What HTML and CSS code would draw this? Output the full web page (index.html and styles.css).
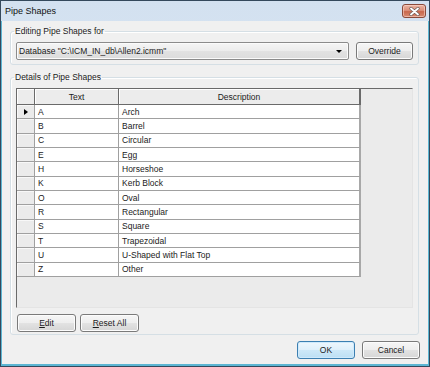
FILE: index.html
```html
<!DOCTYPE html>
<html lang="en">
<head>
<meta charset="utf-8">
<title>Pipe Shapes</title>
<link rel="stylesheet" href="styles.css">
</head>
<body>
<div class="window">
  <div class="titlebar">
    <span class="title">Pipe Shapes</span>
    <button class="close" aria-label="Close">
      <svg width="11" height="9" viewBox="0 0 11 9">
        <path d="M2 1.5 L9 7.5 M9 1.5 L2 7.5" stroke="#6b5a55" stroke-width="3.2" stroke-linecap="round"/>
        <path d="M2 1.5 L9 7.5 M9 1.5 L2 7.5" stroke="#ffffff" stroke-width="1.9" stroke-linecap="round"/>
      </svg>
    </button>
  </div>
  <div class="client">
    <fieldset class="group group-db">
      <legend>Editing Pipe Shapes for</legend>
      <div class="db-row">
        <div class="combo">
          <span class="combo-text">Database "C:\ICM_IN_db\Allen2.icmm"</span>
          <span class="combo-arrow"></span>
        </div>
        <button class="btn btn-override">Override</button>
      </div>
    </fieldset>
    <fieldset class="group group-details">
      <legend>Details of Pipe Shapes</legend>
      <div class="grid">
        <div class="table">
          <div class="hd hd-corner"></div>
          <div class="hd">Text</div>
          <div class="hd hd-last">Description</div>

          <div class="rh"><span class="current"></span></div><div class="cell">A</div><div class="cell cell-last">Arch</div>
          <div class="rh"></div><div class="cell">B</div><div class="cell cell-last">Barrel</div>
          <div class="rh"></div><div class="cell">C</div><div class="cell cell-last">Circular</div>
          <div class="rh"></div><div class="cell">E</div><div class="cell cell-last">Egg</div>
          <div class="rh"></div><div class="cell">H</div><div class="cell cell-last">Horseshoe</div>
          <div class="rh"></div><div class="cell">K</div><div class="cell cell-last">Kerb Block</div>
          <div class="rh"></div><div class="cell">O</div><div class="cell cell-last">Oval</div>
          <div class="rh"></div><div class="cell">R</div><div class="cell cell-last">Rectangular</div>
          <div class="rh"></div><div class="cell">S</div><div class="cell cell-last">Square</div>
          <div class="rh"></div><div class="cell">T</div><div class="cell cell-last">Trapezoidal</div>
          <div class="rh"></div><div class="cell">U</div><div class="cell cell-last">U-Shaped with Flat Top</div>
          <div class="rh"></div><div class="cell">Z</div><div class="cell cell-last">Other</div>
        </div>
      </div>
      <div class="actions">
        <button class="btn btn-action"><u>E</u>dit</button>
        <button class="btn btn-action"><u>R</u>eset All</button>
      </div>
    </fieldset>
    <div class="footer">
      <button class="btn btn-dialog btn-default">OK</button>
      <button class="btn btn-dialog">Cancel</button>
    </div>
  </div>
</div>
</body>
</html>
```

FILE: styles.css
```css
* {
  box-sizing: border-box;
}

html,
body {
  margin: 0;
  padding: 0;
}

body {
  width: 430px;
  height: 367px;
  overflow: hidden;
  font-family: "Liberation Sans", Arial, sans-serif;
  font-size: 8.5px;
  color: #1b1b1b;
  background: #ffffff;
}

.window {
  width: 430px;
  height: 367px;
  border: 1px solid #34495c;
  display: flex;
  flex-direction: column;
  background: linear-gradient(#d3e1f0, #dce7f4 60%, #d6e3f1);
}

.titlebar {
  height: 20px;
  flex: none;
  display: flex;
  align-items: center;
  justify-content: space-between;
  padding: 0 3px 0 4px;
}

.title {
  font-size: 9px;
  color: #111111;
}

.close {
  width: 24px;
  height: 14px;
  padding: 0;
  margin: 0;
  border: 1px solid #8a4a3a;
  border-radius: 3px;
  background: linear-gradient(#eab3a2 0%, #dc907a 45%, #c9684c 55%, #d88a70 100%);
  box-shadow: inset 0 0 0 1px rgba(255, 220, 210, 0.55);
  display: flex;
  align-items: center;
  justify-content: center;
}

.client {
  flex: 1;
  min-height: 0;
  background: #f0f0f0;
  border: 1px solid #5cb6d3;
  border-top: none;
  border-bottom-width: 2px;
  display: flex;
  flex-direction: column;
}

.group {
  margin: 0 9px 0 8px;
  padding: 5px 5px 4px 5px;
  border: 1px solid #d5dfe5;
  border-radius: 3px;
  box-shadow: inset 1px 1px #ffffff;
  min-width: 0;
}

.group legend {
  padding: 0 1px;
  margin-left: -2px;
  height: 11px;
  line-height: 11px;
  color: #1b1b1b;
}

.group-db {
  margin-top: 5px;
}

.group-details {
  margin-top: 7px;
  padding-bottom: 2px;
}

.db-row {
  display: flex;
  gap: 7px;
}

.combo {
  flex: 1;
  height: 18px;
  border: 1px solid #8b8b8b;
  border-radius: 2px;
  background: linear-gradient(#f5f5f5, #ececec 50%, #e2e2e2 51%, #dcdcdc);
  box-shadow: inset 0 0 0 1px #fbfbfb;
  display: flex;
  align-items: center;
  padding: 0 6px 0 2px;
}

.combo-text {
  flex: 1;
  white-space: nowrap;
}

.combo-arrow {
  width: 0;
  height: 0;
  border-left: 3px solid transparent;
  border-right: 3px solid transparent;
  border-top: 3px solid #000000;
  margin-top: 1px;
}

.btn {
  font-family: "Liberation Sans", Arial, sans-serif;
  font-size: 8.5px;
  color: #1b1b1b;
  height: 18px;
  padding: 0;
  margin: 0;
  border: 1px solid #7a7a7a;
  border-radius: 3px;
  background: linear-gradient(#f6f6f6 0%, #eeeeee 48%, #e2e2e2 52%, #d6d6d6 100%);
  box-shadow: inset 0 0 0 1px #fcfcfc;
  display: flex;
  align-items: center;
  justify-content: center;
}

.btn u {
  text-decoration: underline;
}

.btn-override {
  width: 57px;
  flex: none;
}

.grid {
  height: 220px;
  border: 1px solid;
  border-color: #6a6a6a #e4e4e4 #e4e4e4 #6a6a6a;
  background: #ebebeb;
  overflow: hidden;
}

.table {
  display: grid;
  grid-template-columns: 18px 84px 242px;
  grid-template-rows: 16px;
  grid-auto-rows: 14.333px;
}

.hd {
  background: #ececec;
  border-right: 1px solid #6a6a6a;
  border-bottom: 1px solid #6a6a6a;
  box-shadow: inset 1px 1px #ffffff;
  display: flex;
  align-items: center;
  justify-content: center;
  white-space: nowrap;
}

.hd-last {
  border-right-width: 2px;
}

.rh {
  background: #ebebeb;
  border-right: 1px solid #a0a0a0;
  border-bottom: 1px solid #a0a0a0;
  box-shadow: inset 1px 1px #f8f8f8;
  display: flex;
  align-items: center;
  justify-content: center;
}

.current {
  width: 0;
  height: 0;
  border-top: 3.5px solid transparent;
  border-bottom: 3.5px solid transparent;
  border-left: 4px solid #000000;
  margin-left: 1px;
}

.cell {
  background: #ffffff;
  border-right: 1px solid #a0a0a0;
  border-bottom: 1px solid #a0a0a0;
  display: flex;
  align-items: center;
  padding-left: 3px;
  white-space: nowrap;
  overflow: hidden;
}

.cell-last {
  border-right: 2px solid #a8a8a8;
}

.actions {
  display: flex;
  gap: 4px;
  margin-top: 6px;
  padding-left: 1px;
}

.btn-action {
  width: 59px;
}

.footer {
  display: flex;
  justify-content: flex-end;
  gap: 7px;
  margin: 6px 8px 0 0;
}

.btn-dialog {
  width: 58px;
}

.btn-default {
  border-color: #3c7fb1;
  background: linear-gradient(#eef7fd 0%, #dff0fb 48%, #cde8f8 52%, #bcdff4 100%);
  box-shadow: inset 0 0 0 1px #cfeafc;
}
```
